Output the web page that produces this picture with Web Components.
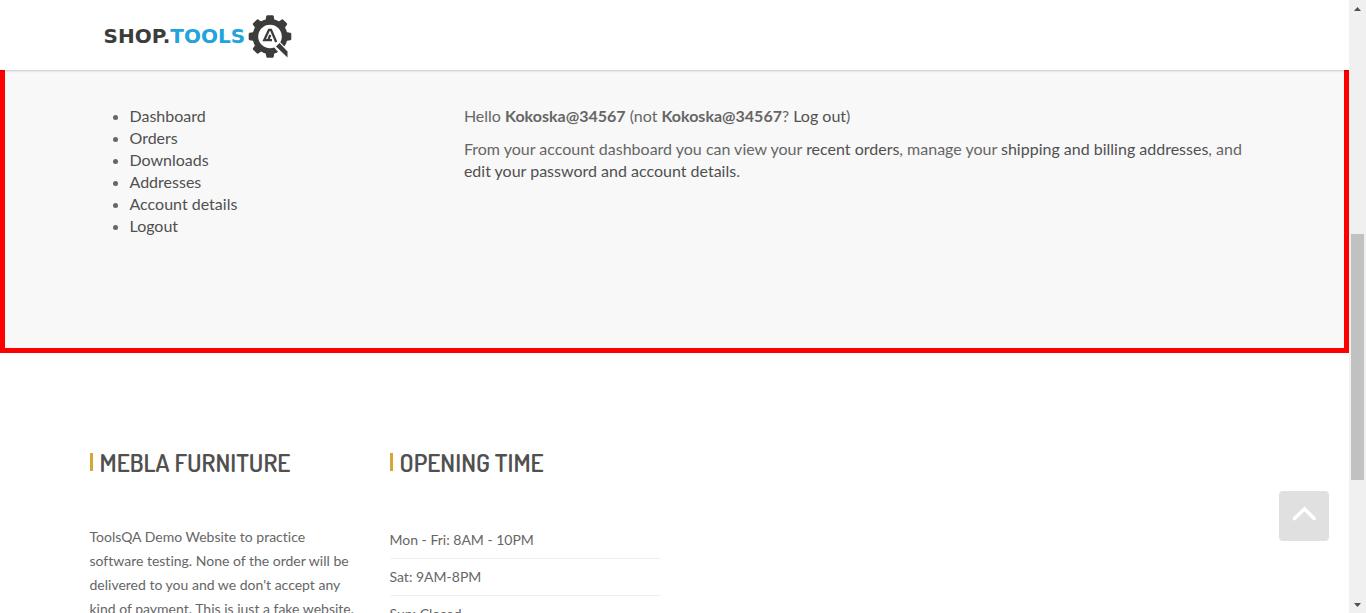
<!DOCTYPE html>
<html lang="en">
<head>
<meta charset="utf-8">
<title>My Account – Shop.Tools</title>
<style>
  body { margin: 0; background: #fff; color: #666; font: 16px/22px Lato, "Open Sans", sans-serif; font-variant-ligatures: none; overflow: hidden; }
</style>
</head>
<body>
<shop-page>
  <shop-header slot="header"></shop-header>
  <account-panel>
    <account-nav slot="nav"></account-nav>
    <account-welcome user="Kokoska@34567"></account-welcome>
  </account-panel>
  <shop-footer>
    <footer-widget heading="Mebla Furniture">
      <footer-about>ToolsQA Demo Website to practice software testing. None of the order will be delivered to you and we don't accept any kind of payment. This is just a fake website.</footer-about>
    </footer-widget>
    <footer-widget heading="Opening Time">
      <opening-hours></opening-hours>
    </footer-widget>
  </shop-footer>
  <back-to-top slot="overlay"></back-to-top>
  <scroll-rail slot="rail"></scroll-rail>
</shop-page>

<script>
  class View extends HTMLElement {
    constructor() {
      super();
      this.attachShadow({ mode: "open" });
    }
    connectedCallback() {
      const template = document.createElement("template");
      template.innerHTML = this.render();
      this.shadowRoot.replaceChildren(template.content.cloneNode(true));
    }
  }

  customElements.define("shop-page", class extends View {
    render() {
      return `<style>
        :host { display: grid; grid-template-columns: minmax(0, 1fr) 17px; height: 100vh; overflow: hidden; }
        .view { position: relative; overflow: hidden; }
      </style>
      <div class="view">
        <slot name="header"></slot>
        <main><slot></slot></main>
        <slot name="overlay"></slot>
      </div>
      <slot name="rail"></slot>`;
    }
  });

  customElements.define("shop-header", class extends View {
    render() {
      return `<style>
        :host { display: block; position: relative; z-index: 1; background: #fff; box-shadow: 0 1px 2px rgba(0,0,0,.2); }
        header { display: flex; align-items: center; max-width: 1170px; height: 70px; margin: 0 auto; }
      </style>
      <header><shop-logo></shop-logo></header>`;
    }
  });

  customElements.define("shop-logo", class extends View {
    render() {
      return `<style>
        :host { display: block; padding-left: 14px; }
        a { display: flex; align-items: center; gap: 3px; height: 44px; margin-top: 4px; color: #3c3c3b;
            font: bold 20px/24px "DejaVu Sans", sans-serif; text-decoration: none; }
        span { padding-bottom: 2px; }
        b { color: #23a3dd; }
        svg { display: block; }
      </style>
      <a href="#" aria-label="Shop.Tools home"><span>SHOP.<b>TOOLS</b></span>
        <svg width="44" height="44" viewBox="0 0 44 44" aria-hidden="true">
          <g fill="#3c3c3b">
            <circle cx="22" cy="21.500" r="17.500"/>
            <path id="t" d="M17.500 6 18.300 1.200Q18.500.2 19.500.2H24.500Q25.500.2 25.700 1.200L26.500 6Z"/>
            <use href="#t" transform="rotate(45 22 21.500)"/>
            <use href="#t" transform="rotate(90 22 21.500)"/>
            <use href="#t" transform="rotate(180 22 21.500)"/>
            <use href="#t" transform="rotate(225 22 21.500)"/>
            <use href="#t" transform="rotate(270 22 21.500)"/>
            <use href="#t" transform="rotate(315 22 21.500)"/>
          </g>
          <path d="M25 31 31 26 43 38V44H36Z" fill="#fff"/>
          <circle cx="22" cy="21.500" r="11.800" fill="#fff"/>
          <path d="M28 31.500 31.500 28 39.500 36.500V42.500Z" fill="#3c3c3b"/>
          <path d="M24 25.200H16.200L21 14.800H23L28.200 27M20.200 25.200 22.300 19.800" fill="none" stroke="#3c3c3b" stroke-width="2.300"/>
        </svg>
      </a>`;
    }
  });

  customElements.define("account-panel", class extends View {
    render() {
      return `<style>
        :host { display: block; background: #f8f8f8; border: 5px solid #f00; border-top: 0; }
        .inner { display: grid; grid-template-columns: 32% 68%; max-width: 1170px; min-height: 243px; margin: 0 auto; padding-top: 35px; }
      </style>
      <div class="inner"><slot name="nav"></slot><slot></slot></div>`;
    }
  });

  customElements.define("account-nav", class extends View {
    render() {
      const items = ["Dashboard", "Orders", "Downloads", "Addresses", "Account details", "Logout"];
      return `<style>
        :host { display: block; }
        ul { margin: 0; padding-left: 40px; }
        a { color: #505050; text-decoration: none; }
      </style>
      <nav aria-label="Account"><ul>${items.map(i => `<li><a href="#">${i}</a></li>`).join("")}</ul></nav>`;
    }
  });

  customElements.define("account-welcome", class extends View {
    render() {
      const user = this.getAttribute("user");
      return `<style>
        :host { display: block; }
        p { margin: 0 0 11px; }
        a { color: #505050; text-decoration: none; }
      </style>
      <p>Hello <strong>${user}</strong> (not <strong>${user}</strong>? <a href="#">Log out</a>)</p>
      <p>From your account dashboard you can view your <a href="#">recent orders</a>, manage your <a href="#">shipping and billing addresses</a>, and <a href="#">edit your password and account details</a>.</p>`;
    }
  });

  customElements.define("shop-footer", class extends View {
    render() {
      return `<style>
        :host { display: block; padding-top: 95px; }
        footer { display: grid; grid-template-columns: repeat(4, minmax(0, 1fr)); gap: 30px; max-width: 1170px; margin: 0 auto; }
      </style>
      <footer><slot></slot></footer>`;
    }
  });

  customElements.define("footer-widget", class extends View {
    render() {
      return `<style>
        :host { display: block; font-size: 14px; line-height: 24px; }
        h2 { display: flex; align-items: center; gap: 7px; margin: 0 0 49px; color: #505050; white-space: nowrap;
             font: 600 25px/28px Dosis, "Liberation Sans Narrow", sans-serif; text-transform: uppercase; }
        h2::before { content: ""; width: 3px; height: 18px; background: #d5a638; }
      </style>
      <h2>${this.getAttribute("heading")}</h2>
      <slot></slot>`;
    }
  });

  customElements.define("footer-about", class extends View {
    render() {
      return `<style>
        :host { display: block; }
        p { margin: 0; }
      </style>
      <p><slot></slot></p>`;
    }
  });

  customElements.define("opening-hours", class extends View {
    render() {
      const rows = ["Mon - Fri: 8AM - 10PM", "Sat: 9AM-8PM", "Sun: Closed"];
      return `<style>
        :host { display: block; }
        ul { margin: 0; padding: 0; list-style: none; }
        li { padding: 6px 0; border-bottom: 1px solid #efefef; }
        li:first-child { padding-top: 3px; }
      </style>
      <ul>${rows.map(r => `<li>${r}</li>`).join("")}</ul>`;
    }
  });

  customElements.define("back-to-top", class extends View {
    render() {
      return `<style>
        :host { display: block; position: absolute; right: 20px; bottom: 72px; }
        button { display: grid; justify-items: center; align-items: start; width: 50px; height: 50px; margin: 0; padding: 15px 0 0;
                 border: 0; border-radius: 4px; background: #e0e0e0; }
        svg { display: block; }
      </style>
      <button type="button" aria-label="Back to top">
        <svg width="24" height="15" viewBox="0 0 24 15"><path d="M2.500 12.500 12.500 3 22.200 12.500" fill="none" stroke="#fff" stroke-width="3.600" stroke-linecap="round"/></svg>
      </button>`;
    }
  });

  customElements.define("scroll-rail", class extends View {
    render() {
      return `<style>
        :host { display: grid; grid-template-rows: 17px 217fr 246fr 116fr 17px; justify-items: center; align-items: center; background: #f0f0f0; }
        i { grid-row: 3; align-self: stretch; width: 13px; background: #c1c1c1; }
        svg { display: block; fill: #505050; }
        svg:last-child { grid-row: 5; }
      </style>
      <svg width="7" height="4" viewBox="0 0 7 4"><path d="M0 4 3.500 0 7 4Z"/></svg>
      <i></i>
      <svg width="7" height="4" viewBox="0 0 7 4"><path d="M0 0 3.500 4 7 0Z"/></svg>`;
    }
  });
</script>
</body>
</html>
